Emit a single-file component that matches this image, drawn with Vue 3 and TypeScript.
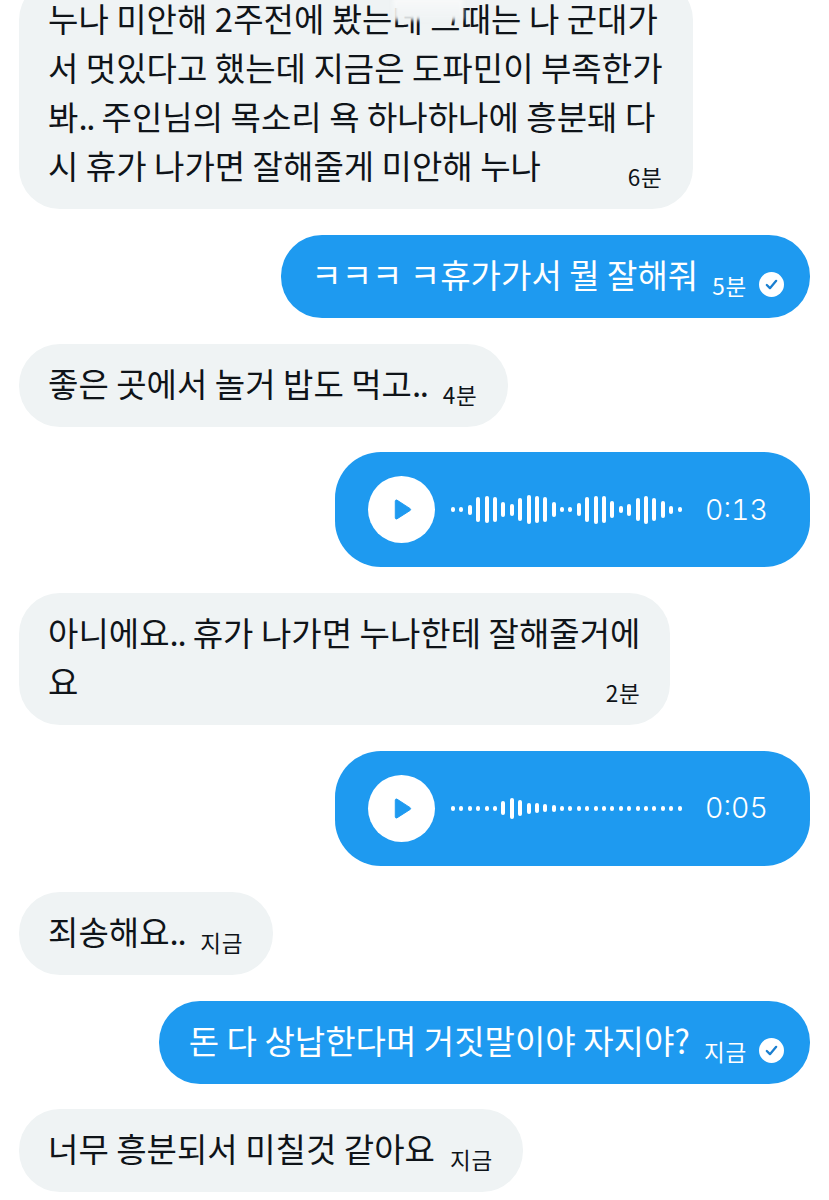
<template>
  <div class="chat">
    <!-- first bubble runs off the top of the screen -->
    <div class="row first">
      <div class="bubble in multi">
        <p class="text">누나 미안해 2주전에 봤는데 그때는 나 군대가<br />서 멋있다고 했는데 지금은 도파민이 부족한가<br />봐<span class="dots">..</span> 주인님의 목소리 욕 하나하나에 흥분돼 다<br />시 휴가 나가면 잘해줄게 미안해 누나</p>
        <span class="meta">6분</span>
        <span class="smudge"></span>
      </div>
    </div>

    <div class="row out">
      <div class="bubble sent">
        <p class="text">ㅋㅋㅋ ㅋ휴가가서 뭘 잘해줘</p>
        <span class="meta">5분
          <svg class="check" viewBox="0 0 24 24"><circle cx="12" cy="12" r="12" fill="#fff" /><path d="M7.5 12.5l3 3 6-7" fill="none" stroke="#1a7fd0" stroke-width="2.2" stroke-linecap="round" stroke-linejoin="round" /></svg>
        </span>
      </div>
    </div>

    <div class="row">
      <div class="bubble in">
        <p class="text">좋은 곳에서 놀거 밥도 먹고<span class="dots">..</span></p>
        <span class="meta">4분</span>
      </div>
    </div>

    <div class="row out">
      <div class="bubble voice">
        <span class="play">
          <svg viewBox="0 0 20 24" width="20" height="23"><path d="M3 3.2v17.6c0 .9 1 1.4 1.7 1l13.8-8.8c.7-.4.7-1.5 0-1.9L4.7 2.2C4 1.800 3 2.300 3 3.200z" fill="#1e9af0" stroke="#1e9af0" stroke-linejoin="round" /></svg>
        </span>
        <span class="wave">
          <i v-for="(h, i) in waveA" :key="i" :style="{ height: h + 'px' }"></i>
        </span>
        <span class="dur">0:13</span>
      </div>
    </div>

    <div class="row">
      <div class="bubble in multi">
        <p class="text">아니에요<span class="dots">..</span> 휴가 나가면 누나한테 잘해줄거에<br />요</p>
        <span class="meta">2분</span>
      </div>
    </div>

    <div class="row out">
      <div class="bubble voice">
        <span class="play">
          <svg viewBox="0 0 20 24" width="20" height="23"><path d="M3 3.2v17.6c0 .9 1 1.4 1.7 1l13.8-8.8c.7-.4.7-1.5 0-1.9L4.7 2.2C4 1.800 3 2.300 3 3.200z" fill="#1e9af0" stroke="#1e9af0" stroke-linejoin="round" /></svg>
        </span>
        <span class="wave">
          <i v-for="(h, i) in waveB" :key="i" :style="{ height: h + 'px' }"></i>
        </span>
        <span class="dur">0:05</span>
      </div>
    </div>

    <div class="row">
      <div class="bubble in">
        <p class="text">죄송해요<span class="dots">..</span></p>
        <span class="meta">지금</span>
      </div>
    </div>

    <div class="row out">
      <div class="bubble sent">
        <p class="text">돈 다 상납한다며 거짓말이야 자지야?</p>
        <span class="meta">지금
          <svg class="check" viewBox="0 0 24 24"><circle cx="12" cy="12" r="12" fill="#fff" /><path d="M7.5 12.5l3 3 6-7" fill="none" stroke="#1a7fd0" stroke-width="2.2" stroke-linecap="round" stroke-linejoin="round" /></svg>
        </span>
      </div>
    </div>

    <div class="row">
      <div class="bubble in">
        <p class="text">너무 흥분되서 미칠것 같아요</p>
        <span class="meta">지금</span>
      </div>
    </div>
  </div>
</template>

<script setup lang="ts">
// bar heights read off the screenshot, in px
const waveA: number[] = [5, 5, 10, 25, 27, 25, 15, 12, 23, 29, 27, 25, 15, 5, 5, 13, 25, 28, 27, 17, 7, 12, 23, 28, 23, 17, 8, 5];
const waveB: number[] = [5, 5, 5, 5, 5, 5, 14, 21, 16, 11, 10, 8, 7, 5, 5, 5, 5, 5, 5, 5, 5, 5, 5, 5, 5, 5, 5, 5];
</script>

<style>
html,
body {
  background: #fff;
  overflow: hidden;
}
</style>

<style scoped>
.chat {
  display: flex;
  flex-direction: column;
  gap: 25.8px;
  height: 1200px;
  overflow: hidden;
  font-family: "Noto Sans CJK KR", "Noto Sans", sans-serif;
}

.row {
  display: flex;
  padding: 0 19px;
}

.row.first {
  margin-top: -21px;
}

.row.out {
  justify-content: flex-end;
}

.bubble {
  position: relative;
  display: flex;
  align-items: flex-end;
  padding: 15px 30px 19px 29px;
  border-radius: 41px;
}

.bubble.in {
  background: #eff3f4;
  color: #0f1419;
}

.bubble.sent {
  background: #1e9af0;
  color: #fff;
  padding-left: 30px;
  padding-right: 26px;
}

.bubble.multi {
  flex-direction: column;
  align-items: stretch;
}

.text {
  margin: 0;
  font-size: 33px;
  line-height: 49px;
  letter-spacing: 0.03px;
  white-space: nowrap;
}

/* the two dots sit closer together in the reference */
.dots {
  letter-spacing: -1.3px;
}

.meta {
  display: inline-flex;
  align-items: center;
  gap: 12px;
  margin-left: 15px;
  margin-bottom: -2px;
  font-size: 22.5px;
  line-height: 32px;
  letter-spacing: 0.8px;
  white-space: nowrap;
}

.bubble.sent .meta {
  margin-left: 14px;
}

.bubble.multi .meta {
  align-self: flex-end;
  margin-top: -30px;
}

.check {
  width: 25px;
  height: 25px;
}

.bubble.voice {
  align-items: center;
  width: 475px;
  box-sizing: border-box;
  padding: 24px 42px 24px 33px;
  background: #1e9af0;
  color: #fff;
  border-radius: 46px;
}

.play {
  display: flex;
  flex: none;
  align-items: center;
  justify-content: center;
  width: 67px;
  height: 67px;
  border-radius: 50%;
  background: #fff;
}

.wave {
  display: flex;
  flex: 1;
  align-items: center;
  gap: 4.4px;
  margin-left: 16px;
}

.wave i {
  display: block;
  flex: none;
  width: 4px;
  border-radius: 2px;
  background: #fff;
}

.dur {
  font-family: Inter, "Noto Sans", sans-serif;
  font-size: 28.5px;
  font-weight: 300;
  font-variant-numeric: tabular-nums;
  line-height: 32px;
}

/* the white smear over the top line of the screenshot */
.smudge {
  position: absolute;
  left: 374px;
  top: 19px;
  width: 70px;
  height: 22px;
  background: linear-gradient(#f9fafa, #eff3f4);
  filter: blur(2px);
}
</style>
